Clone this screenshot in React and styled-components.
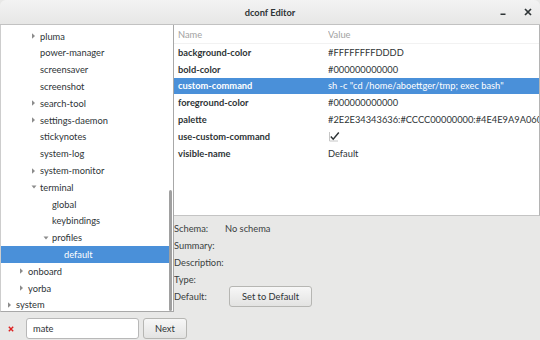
import React from "react";
import styled, { createGlobalStyle } from "styled-components";

const GlobalStyle = createGlobalStyle`
  html, body {
    margin: 0;
    padding: 0;
    background: #e8e8e7;
  }
  body {
    font-family: Lato, "Open Sans", sans-serif;
    font-size: 9.3px;
    color: #2e3436;
  }
`;

const Window = styled.div`
  width: 540px;
  height: 340px;
  display: flex;
  flex-direction: column;
  background: #e8e8e7;
  overflow: hidden;
`;

const TitleBar = styled.div`
  height: 24px;
  flex: none;
  display: flex;
  align-items: center;
  justify-content: center;
  position: relative;
  background: linear-gradient(#f3f3f3, #e7e7e6);
  border-bottom: 1px solid #c2c2c2;
  border-radius: 6px 6px 0 0;
`;

const Title = styled.div`
  font-weight: bold;
  color: #2e3436;
`;

const WindowButtons = styled.div`
  position: absolute;
  right: 8px;
  top: 0;
  height: 24px;
  display: flex;
  align-items: center;
  gap: 18px;
`;

const Main = styled.div`
  height: 287px;
  flex: none;
  display: flex;
`;

const Tree = styled.div`
  width: 174px;
  flex: none;
  background: #fff;
  border-right: 1px solid #a8a8a8;
  border-bottom: 1px solid #a8a8a8;
  border-left: 1px solid #cdcdcd;
  padding-top: 2.8px;
  box-sizing: border-box;
  position: relative;
  overflow: hidden;
`;

const Scrollbar = styled.div`
  position: absolute;
  right: 1px;
  top: 165px;
  width: 3px;
  height: 121px;
  border-radius: 2px;
  background: #a0a0a0;
`;

const TreeRow = styled.div`
  height: 16.8px;
  display: flex;
  align-items: center;
  padding-left: ${({ level }) => 4 + level * 12}px;
  margin-right: 4px;
  background: ${({ selected }) => (selected ? "#4a90d9" : "transparent")};
  color: ${({ selected }) => (selected ? "#fff" : "#2e3436")};
  white-space: nowrap;
`;

const Expander = styled.span`
  width: 11px;
  flex: none;
  display: flex;
  align-items: center;
  padding-left: 2px;
  box-sizing: border-box;
`;

const RightPane = styled.div`
  flex: 1;
  display: flex;
  flex-direction: column;
  min-width: 0;
`;

const KeyList = styled.div`
  height: 191px;
  flex: none;
  background: #fff;
  border-right: 1px solid #b4b4b4;
  border-bottom: 1px solid #c4c4c4;
  box-sizing: border-box;
  overflow: hidden;
`;

const HeaderRow = styled.div`
  height: 19px;
  display: flex;
  align-items: center;
  color: #a2a2a2;
  border-bottom: 1px solid #f2f2f2;
  box-sizing: border-box;
`;

const KeyRow = styled.div`
  height: 16.8px;
  display: flex;
  align-items: center;
  white-space: nowrap;
  background: ${({ selected }) => (selected ? "#4a90d9" : "transparent")};
  color: ${({ selected }) => (selected ? "#fff" : "#2e3436")};
`;

const NameCell = styled.div`
  width: 154px;
  flex: none;
  padding-left: 4px;
  box-sizing: border-box;
  font-weight: ${({ header }) => (header ? "normal" : "bold")};
`;

const ValueCell = styled.div`
  flex: 1;
  overflow: hidden;
  display: flex;
  align-items: center;
`;

const Details = styled.div`
  display: grid;
  grid-template-columns: 51px auto;
  grid-auto-rows: 17px;
  align-items: center;
  justify-items: start;
  padding-top: 3.5px;
  color: #3a3f40;
`;

const DefaultLabel = styled.span`
  align-self: start;
  line-height: 17px;
`;

const Button = styled.div`
  height: 21px;
  box-sizing: border-box;
  padding: 0 ${({ pad }) => pad}px;
  margin-left: ${({ offset }) => offset || 0}px;
  margin-top: ${({ drop }) => drop || 0}px;
  border: 1px solid #b6b6b3;
  border-radius: 3px;
  background: linear-gradient(#f7f7f7, #e3e3e2);
  display: flex;
  align-items: center;
  justify-content: center;
  color: #2e3436;
  white-space: nowrap;
`;

const SearchBar = styled.div`
  flex: 1;
  display: flex;
  align-items: flex-end;
  padding: 0 0 1px 8px;
`;

const ClearIcon = styled.span`
  width: 18px;
  height: 21px;
  display: flex;
  align-items: center;
`;

const Entry = styled.div`
  width: 113px;
  height: 21px;
  box-sizing: border-box;
  background: #fff;
  border: 1px solid #b8b8b8;
  border-radius: 3px;
  display: flex;
  align-items: center;
  padding-left: 6px;
`;

const TreeArrow = ({ open }) => (
  <svg width="6" height="6" viewBox="0 0 6 6">
    {open ? (
      <path d="M0.5 1.5 L5.5 1.5 L3 4.5 Z" fill="#8c8c8c" />
    ) : (
      <path d="M1 0.3 L4 3 L1 5.7 Z" fill="#8c8c8c" />
    )}
  </svg>
);

const CheckBox = () => (
  <svg width="13" height="11" viewBox="0 0 13 11">
    <path d="M1.5 1 V10 H10" fill="none" stroke="#c6c6c6" strokeWidth="1" />
    <path
      d="M2.8 5.6 L5.2 8.2 L10.8 1.6"
      fill="none"
      stroke="#2e3436"
      strokeWidth="1.5"
    />
  </svg>
);

const treeItems = [
  { label: "pluma", level: 2, arrow: "closed" },
  { label: "power-manager", level: 2 },
  { label: "screensaver", level: 2 },
  { label: "screenshot", level: 2 },
  { label: "search-tool", level: 2, arrow: "closed" },
  { label: "settings-daemon", level: 2, arrow: "closed" },
  { label: "stickynotes", level: 2 },
  { label: "system-log", level: 2 },
  { label: "system-monitor", level: 2, arrow: "closed" },
  { label: "terminal", level: 2, arrow: "open" },
  { label: "global", level: 3 },
  { label: "keybindings", level: 3 },
  { label: "profiles", level: 3, arrow: "open" },
  { label: "default", level: 4, selected: true },
  { label: "onboard", level: 1, arrow: "closed" },
  { label: "yorba", level: 1, arrow: "closed" },
  { label: "system", level: 0, arrow: "closed" },
];

const keys = [
  { name: "background-color", value: "#FFFFFFFFDDDD" },
  { name: "bold-color", value: "#000000000000" },
  {
    name: "custom-command",
    value: 'sh -c "cd /home/aboettger/tmp; exec bash"',
    selected: true,
  },
  { name: "foreground-color", value: "#000000000000" },
  {
    name: "palette",
    value: "#2E2E34343636:#CCCC00000000:#4E4E9A9A0606:#C4C4A0A00000",
  },
  { name: "use-custom-command", check: true },
  { name: "visible-name", value: "Default" },
];

export default function App() {
  return (
    <Window>
      <GlobalStyle />
      <TitleBar>
        <Title>dconf Editor</Title>
        <WindowButtons>
          <svg width="6" height="8" viewBox="0 0 6 8">
            <rect x="0.5" y="5.5" width="5" height="1.5" fill="#2e3436" />
          </svg>
          <svg width="8" height="8" viewBox="0 0 8 8">
            <path
              d="M1 1 L7 7 M7 1 L1 7"
              stroke="#2e3436"
              strokeWidth="1.7"
            />
          </svg>
        </WindowButtons>
      </TitleBar>
      <Main>
        <Tree>
          {treeItems.map((item) => (
            <TreeRow key={item.label} level={item.level} selected={item.selected}>
              <Expander>
                {item.arrow && <TreeArrow open={item.arrow === "open"} />}
              </Expander>
              {item.label}
            </TreeRow>
          ))}
          <Scrollbar />
        </Tree>
        <RightPane>
          <KeyList>
            <HeaderRow>
              <NameCell header>Name</NameCell>
              <ValueCell>Value</ValueCell>
            </HeaderRow>
            {keys.map((k) => (
              <KeyRow key={k.name} selected={k.selected}>
                <NameCell>{k.name}</NameCell>
                <ValueCell>{k.check ? <CheckBox /> : k.value}</ValueCell>
              </KeyRow>
            ))}
          </KeyList>
          <Details>
            <span>Schema:</span>
            <span>No schema</span>
            <span>Summary:</span>
            <span />
            <span>Description:</span>
            <span />
            <span>Type:</span>
            <span />
            <DefaultLabel>Default:</DefaultLabel>
            <Button pad={12} offset={4} drop={1.5}>
              Set to Default
            </Button>
          </Details>
        </RightPane>
      </Main>
      <SearchBar>
        <ClearIcon>
          <svg width="6" height="6" viewBox="0 0 6 6">
            <path d="M0.8 0.8 L5.2 5.2 M5.2 0.8 L0.8 5.2" stroke="#d22" strokeWidth="1.4" />
          </svg>
        </ClearIcon>
        <Entry>mate</Entry>
        <Button pad={11} offset={4}>
          Next
        </Button>
      </SearchBar>
    </Window>
  );
}
